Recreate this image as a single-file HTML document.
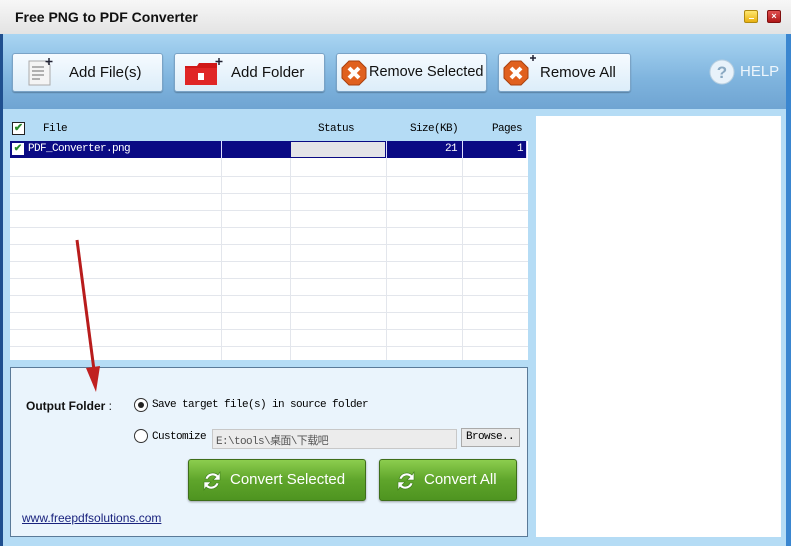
<!DOCTYPE html>
<html><head><meta charset="utf-8"><style>
*{margin:0;padding:0;box-sizing:border-box}
body{width:791px;height:546px;overflow:hidden;position:relative;background:#b5dcf5;font-family:"Liberation Sans","Noto Sans CJK SC",sans-serif}
.abs{position:absolute;white-space:nowrap}
.title{left:0;top:0;width:791px;height:34px;background:linear-gradient(#f7f7f7,#e3e3e3);}
.title span{position:absolute;left:15px;top:9px;font-weight:bold;font-size:14px;color:#111}
.tb{left:0;top:34px;width:791px;height:75px;background:linear-gradient(#a9d5f2,#7fb4de 60%,#6fa4d2)}
.btn{position:absolute;top:53px;height:39px;border:1px solid #7aa3c6;border-radius:3px;background:linear-gradient(#f6fbff,#dcedf9);box-shadow:0 1px 1px rgba(0,0,0,.25);font-size:15px;color:#111;white-space:nowrap}
.btn span{position:absolute;top:10px}
.mono{font-family:"Liberation Mono","Noto Sans CJK SC",monospace;font-size:11px;letter-spacing:-0.6px}
.gbtn{position:absolute;top:459px;height:42px;border:1px solid #3e6e1a;border-radius:3px;background:linear-gradient(#8ccd4e,#5fa52b 50%,#4e9420);color:#fff;font-size:15px;box-shadow:0 1px 2px rgba(0,0,0,.35);white-space:nowrap}
.gbtn span{position:absolute;top:11px}
</style></head><body>
<div class="abs title"><span>Free PNG to PDF Converter</span>
<div class="abs" style="left:744px;top:10px;width:14px;height:13px;background:linear-gradient(#ffe870,#e8b010);border:1px solid #b08a10;border-radius:2px"><div style="position:absolute;left:4px;top:7px;width:5px;height:1px;background:#fff"></div></div>
<div class="abs" style="left:767px;top:10px;width:14px;height:13px;background:linear-gradient(#e05050,#b01818);border:1px solid #801010;border-radius:2px;color:#fff;font-size:9px;text-align:center;line-height:11px;font-weight:bold">×</div>
</div>
<div class="abs tb"></div>
<div class="abs" style="left:0;top:34px;width:3px;height:512px;background:#1f4f8f"></div>
<div class="abs" style="left:786px;top:34px;width:5px;height:512px;background:#3a86d0"></div>

<div class="btn" style="left:12px;width:151px">
<svg class="abs" style="left:13px;top:4px" width="30" height="30"><path d="M3 3h17l4 4v20H3z" fill="#f4f4f4" stroke="#aaa"/><path d="M6 9h12M6 13h12M6 17h12M6 21h8" stroke="#999" stroke-width="1.5"/><path d="M23 0v7M19.5 3.5h7" stroke="#223" stroke-width="1.5"/></svg>
<span style="left:56px">Add File(s)</span></div>
<div class="btn" style="left:174px;width:151px">
<svg class="abs" style="left:8px;top:4px" width="40" height="30"><path d="M2 8h12l2-3h18v22H2z" fill="#d01818"/><rect x="2" y="10" width="32" height="17" fill="#e02626"/><rect x="15" y="15" width="6" height="7" fill="#fff"/><path d="M36 0v7M32.5 3.5h7" stroke="#223" stroke-width="1.5"/></svg>
<span style="left:56px">Add Folder</span></div>
<div class="btn" style="left:336px;width:151px">
<svg class="abs" style="left:4px;top:6px" width="26" height="26"><polygon points="8,1 18,1 25,8 25,18 18,25 8,25 1,18 1,8" fill="#e0601e" stroke="#a8400e"/><path d="M8 8l10 10M18 8l-10 10" stroke="#fff" stroke-width="4"/></svg>
<span style="left:32px;font-size:14.5px">Remove Selected</span></div>
<div class="btn" style="left:498px;width:133px">
<svg class="abs" style="left:4px;top:0px" width="34" height="34"><polygon points="8,7 18,7 25,14 25,24 18,31 8,31 1,24 1,14" fill="#e0601e" stroke="#a8400e"/><path d="M8 14l10 10M18 14l-10 10" stroke="#fff" stroke-width="4"/><path d="M30 1v6M27 4h6" stroke="#223" stroke-width="1.5"/></svg>
<span style="left:41px">Remove All</span></div>
<svg class="abs" style="left:709px;top:59px" width="26" height="26"><circle cx="13" cy="13" r="12" fill="#e8f2fa" stroke="#b8cfe0"/><text x="13" y="19" text-anchor="middle" font-size="17" font-weight="bold" fill="#8aa9c2" font-family="Liberation Sans">?</text></svg>
<div class="abs" style="left:740px;top:63px;color:#eef6fc;font-size:15px">HELP</div>

<!-- table -->
<div class="abs" style="left:10px;top:118px;width:518px;height:242px;background:#fff">
<div class="abs" style="left:0;top:0;width:518px;height:23px;background:#b5dcf5"></div>
<svg class="abs" style="left:0;top:23px" width="518" height="219">
<g stroke="#e3e6ec"><path d="M0 35.5h518M0 52.5h518M0 69.5h518M0 86.5h518M0 103.5h518M0 120.5h518M0 137.5h518M0 154.5h518M0 171.5h518M0 188.5h518M0 205.5h518"/>
<path d="M211.5 0v219M280.5 0v219M376.5 0v219M452.5 0v219"/></g>
<rect x="0" y="0" width="517" height="17" fill="#0a0a84"/>
<rect x="281" y="1" width="94" height="15" fill="#e4e4e8"/>
<path d="M211.5 0v17M376.5 0v17M452.5 0v17M516.5 0v17" stroke="#e0e0ff"/>
</svg>
</div>
<div class="abs" style="left:12px;top:122px;width:13px;height:13px;border:1px solid #222;background:#fff;color:#2a8a2a;font-size:11px;line-height:11px;text-align:center;font-weight:bold">✔</div>
<div class="abs mono" style="left:43px;top:123px">File</div>
<div class="abs mono" style="left:318px;top:123px">Status</div>
<div class="abs mono" style="left:410px;top:123px">Size(KB)</div>
<div class="abs mono" style="left:492px;top:123px">Pages</div>
<div class="abs" style="left:12px;top:143px;width:12px;height:12px;background:#fff;color:#2a8a2a;font-size:10px;line-height:12px;text-align:center;font-weight:bold">✔</div>
<div class="abs mono" style="left:28px;top:143px;color:#fff">PDF_Converter.png</div>
<div class="abs mono" style="left:400px;top:143px;width:57px;text-align:right;color:#fff">21</div>
<div class="abs mono" style="left:480px;top:143px;width:43px;text-align:right;color:#fff">1</div>

<div class="abs" style="left:536px;top:116px;width:245px;height:421px;background:#fff"></div>

<!-- bottom -->
<div class="abs" style="left:10px;top:367px;width:518px;height:170px;border:1px solid #5a7a98;background:#eaf4fc"></div>
<div class="abs" style="left:26px;top:399px;font-size:12px;font-weight:bold;color:#111">Output Folder <span style="font-weight:normal">:</span></div>
<div class="abs" style="left:134px;top:398px;width:14px;height:14px;border:1px solid #333;border-radius:50%;background:#fff"><div style="position:absolute;left:3px;top:3px;width:6px;height:6px;border-radius:50%;background:#222"></div></div>
<div class="abs mono" style="left:152px;top:399px">Save target file(s) in source folder</div>
<div class="abs" style="left:134px;top:429px;width:14px;height:14px;border:1px solid #333;border-radius:50%;background:#fff"></div>
<div class="abs mono" style="left:152px;top:431px">Customize</div>
<div class="abs mono" style="left:212px;top:429px;width:245px;height:20px;border:1px solid #c8c8c8;background:#ececec;color:#555;padding:2px 3px">E:\tools\桌面\下载吧</div>
<div class="abs mono" style="left:461px;top:428px;width:59px;height:19px;border:1px solid #aaa;background:#e8e8e8;padding:2px 4px">Browse..</div>
<div class="gbtn" style="left:188px;width:178px">
<svg class="abs" style="left:12px;top:9px" width="22" height="24"><path d="M4 10a8 8 0 0 1 13-4l2-3v8h-7l3-3a5 5 0 0 0-8 2z M18 14a8 8 0 0 1-13 4l-2 3v-8h7l-3 3a5 5 0 0 0 8-2z" fill="#fff" stroke="#3c7a1c" stroke-width=".6"/></svg>
<span style="left:41px">Convert Selected</span></div>
<div class="gbtn" style="left:379px;width:138px">
<svg class="abs" style="left:15px;top:9px" width="22" height="24"><path d="M4 10a8 8 0 0 1 13-4l2-3v8h-7l3-3a5 5 0 0 0-8 2z M18 14a8 8 0 0 1-13 4l-2 3v-8h7l-3 3a5 5 0 0 0 8-2z" fill="#fff" stroke="#3c7a1c" stroke-width=".6"/></svg>
<span style="left:44px">Convert All</span></div>
<div class="abs" style="left:22px;top:511px;font-size:12px;color:#1a237e;text-decoration:underline">www.freepdfsolutions.com</div>

<!-- red arrow -->
<svg class="abs" style="left:60px;top:230px" width="50" height="170"><path d="M17 10L34 140" stroke="#b81c1c" stroke-width="3"/><path d="M26 138l10 24 4-26z" fill="#c02020"/></svg>
</body></html>
